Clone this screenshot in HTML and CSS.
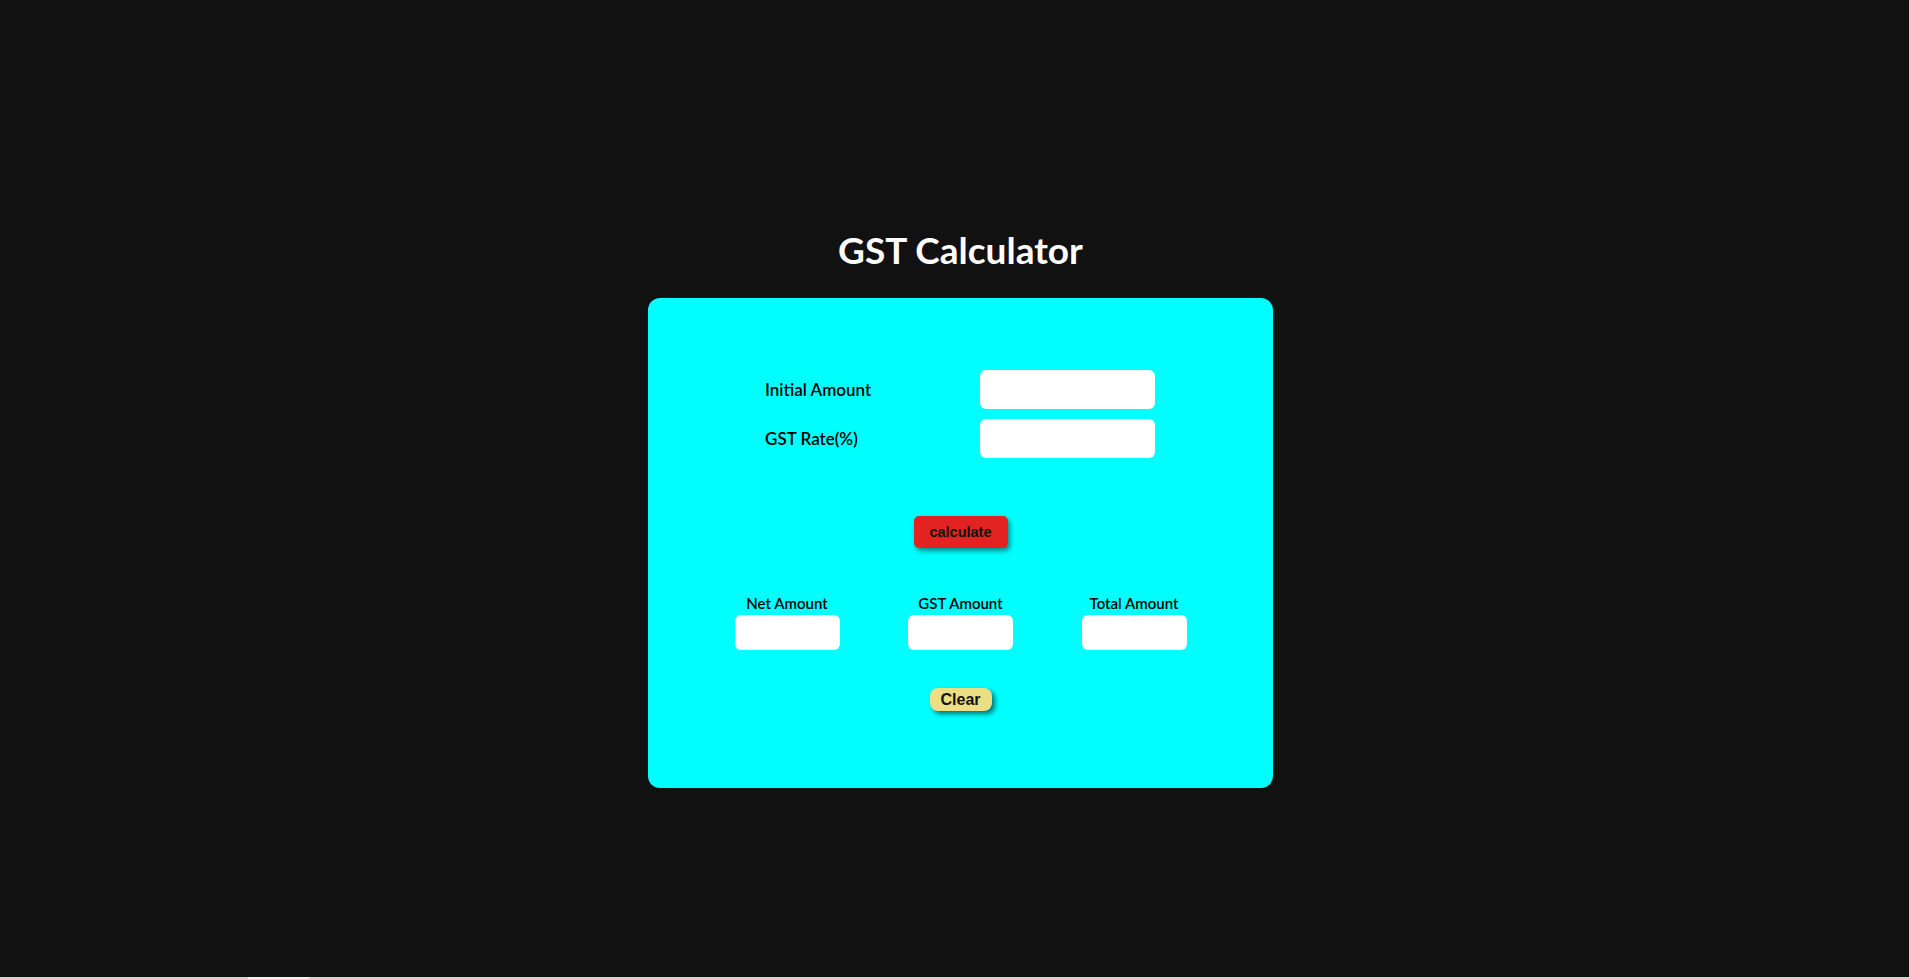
FILE: index.html
```html
<!DOCTYPE html>
<html lang="en">
<head>
<meta charset="UTF-8">
<title>GST Calculator</title>
<link rel="stylesheet" href="styles.css">
</head>
<body>
<main class="page">
  <h1 class="title">GST Calculator</h1>
  <section class="card">
    <div class="form">
      <label class="form-label" for="amount">Initial Amount</label>
      <input class="form-input" id="amount" type="text">
      <label class="form-label" for="rate">GST Rate(%)</label>
      <input class="form-input" id="rate" type="text">
    </div>
    <button class="btn-calc" type="button">calculate</button>
    <div class="results">
      <div class="result">
        <span class="result-label">Net Amount</span>
        <input class="result-box" type="text">
      </div>
      <div class="result">
        <span class="result-label">GST Amount</span>
        <input class="result-box" type="text">
      </div>
      <div class="result">
        <span class="result-label">Total Amount</span>
        <input class="result-box" type="text">
      </div>
    </div>
    <button class="btn-clear" type="button">Clear</button>
  </section>
</main>
<div class="bottom-strip"><div class="bottom-thumb"></div></div>
</body>
</html>
```
FILE: styles.css
```css
* {
  box-sizing: border-box;
}

html, body {
  height: 100%;
}

body {
  margin: 0;
  background: #111111;
  font-family: Lato, "Noto Sans", sans-serif;
  display: flex;
  flex-direction: column;
  min-height: 100vh;
}

.page {
  flex: 1;
  display: flex;
  flex-direction: column;
  align-items: center;
  padding-top: 228px;
  padding-left: 12px;
}

.title {
  margin: 0;
  color: #ffffff;
  font-family: Lato, sans-serif;
  font-weight: 700;
  font-size: 37px;
  line-height: 44px;
}

.card {
  margin-top: 26px;
  width: 625px;
  height: 490px;
  background: #00ffff;
  border-radius: 12px;
  padding-top: 72px;
  display: flex;
  flex-direction: column;
  align-items: center;
}

.form {
  align-self: stretch;
  display: grid;
  grid-template-columns: 215px 175px;
  row-gap: 10px;
  padding-left: 117px;
  align-items: center;
}

.form-label {
  font-size: 17px;
  font-weight: 600;
  color: #000;
}

.form-input {
  width: 175px;
  height: 39px;
  border: none;
  border-radius: 6px;
  background: #ffffff;
  outline: none;
}

.btn-calc {
  margin-top: 58px;
  width: 94px;
  height: 32px;
  border: none;
  border-radius: 5px;
  background: #e32222;
  color: #111;
  font-family: "Liberation Sans", Arial, sans-serif;
  font-weight: 700;
  font-size: 14.5px;
  box-shadow: 2px 3px 5px rgba(0, 0, 0, 0.45);
  padding: 0;
}

.results {
  margin-top: 46px;
  display: flex;
  justify-content: center;
  gap: 68.5px;
}

.result {
  width: 105px;
  display: flex;
  flex-direction: column;
  align-items: center;
  gap: 2px;
}

.result-label {
  font-size: 15px;
  font-weight: 600;
  line-height: 19px;
  color: #000;
  white-space: nowrap;
}

.result-box {
  width: 105px;
  height: 35px;
  border: none;
  border-radius: 6px;
  background: #ffffff;
  outline: none;
}

.btn-clear {
  margin-top: 38px;
  width: 62px;
  height: 23px;
  border: none;
  border-radius: 8px;
  background: #ebdf84;
  color: #111;
  font-family: "Liberation Sans", Arial, sans-serif;
  font-weight: 700;
  font-size: 16px;
  padding: 0;
  box-shadow: 3px 3px 5px rgba(0, 0, 0, 0.55);
}

.bottom-strip {
  height: 2px;
  background: #d2d2d2;
  display: flex;
}

.bottom-thumb {
  margin-left: 248px;
  width: 61px;
  background: #f2f2f2;
}
```
